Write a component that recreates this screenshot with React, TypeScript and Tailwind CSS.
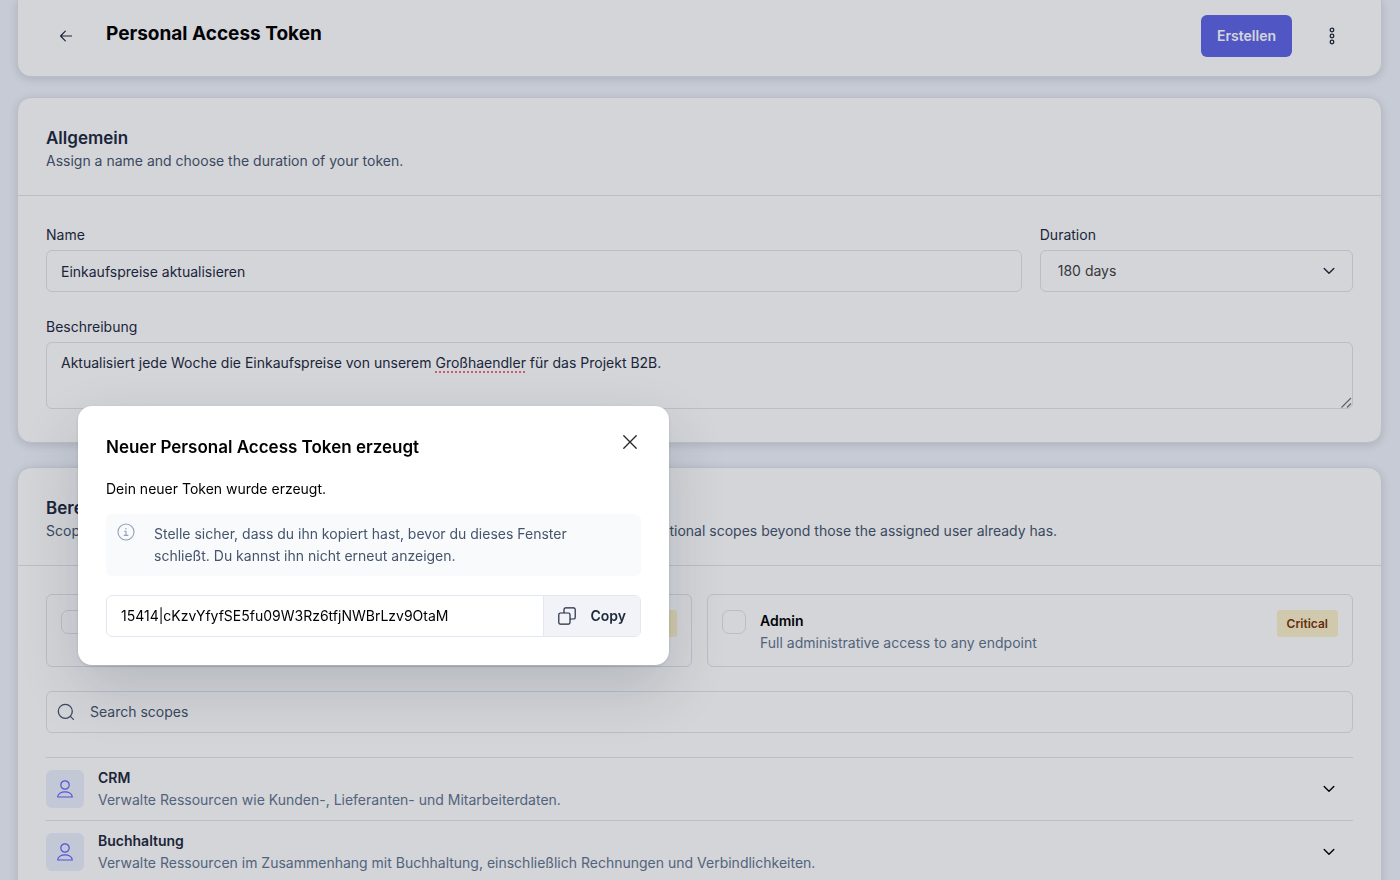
import { useState } from "react";
import type { ReactNode } from "react";

const TOKEN = "15414|cKzvYfyfSE5fu09W3Rz6tfjNWBrLzv9OtaM";

function ArrowLeftIcon() {
  return (
    <svg width="12" height="12" viewBox="0 0 12 12" fill="none" stroke="currentColor" strokeWidth="1.2" strokeLinecap="round" strokeLinejoin="round" aria-hidden="true">
      <path d="M11.5 6H.7M5.3 1.2.6 6l4.7 4.8" />
    </svg>
  );
}

function MoreIcon() {
  return (
    <svg width="6" height="18" viewBox="0 0 6 18" fill="none" stroke="currentColor" strokeWidth="1.3" aria-hidden="true">
      <circle cx="3" cy="3" r="1.8" />
      <circle cx="3" cy="9" r="1.8" />
      <circle cx="3" cy="15" r="1.8" />
    </svg>
  );
}

function ChevronIcon() {
  return (
    <svg width="12" height="8" viewBox="0 0 12 8" fill="none" stroke="currentColor" strokeWidth="1.4" strokeLinecap="round" strokeLinejoin="round" aria-hidden="true">
      <path d="M1.200 1.500 6 6.300l4.800-4.800" />
    </svg>
  );
}

function SearchIcon() {
  return (
    <svg width="18" height="18" viewBox="0 0 18 18" fill="none" stroke="currentColor" strokeWidth="1.3" strokeLinecap="round" aria-hidden="true">
      <circle cx="8.3" cy="8.3" r="7" />
      <path d="m13.4 13.4 3 3" />
    </svg>
  );
}

function UserIcon() {
  return (
    <svg width="18" height="20" viewBox="0 0 18 20" fill="none" stroke="currentColor" strokeWidth="1.2" strokeLinejoin="round" aria-hidden="true">
      <circle cx="9" cy="6" r="4.2" />
      <path d="M1.7 18c.2-3.100 3.500-5.100 7.300-5.100s7.100 2 7.300 5.100Z" />
    </svg>
  );
}

function InfoIcon() {
  return (
    <svg width="18" height="18" viewBox="0 0 18 18" fill="none" stroke="currentColor" strokeWidth="1.1" strokeLinecap="round" strokeLinejoin="round" aria-hidden="true">
      <circle cx="9" cy="9" r="8" />
      <path d="M7.600 8.200H9v4M7.200 12.400h3.700" />
      <circle cx="8.900" cy="5.700" r=".7" fill="currentColor" stroke="none" />
    </svg>
  );
}

function CloseIcon() {
  return (
    <svg width="14" height="14" viewBox="0 0 14 14" fill="none" stroke="currentColor" strokeWidth="1.3" strokeLinecap="round" aria-hidden="true">
      <path d="m.8.8 12.400 12.400M13.200.8.8 13.200" />
    </svg>
  );
}

function CopyIcon() {
  return (
    <svg width="18" height="18" viewBox="0 0 18 18" fill="none" stroke="currentColor" strokeWidth="1.2" strokeLinejoin="round" aria-hidden="true">
      <rect x=".8" y="6" width="11.200" height="11.200" rx="1.600" />
      <path d="M6 6V2.400C6 1.500 6.700.8 7.600.8h8c.9 0 1.600.7 1.600 1.600v8c0 .9-.7 1.600-1.600 1.600H12" />
    </svg>
  );
}

function GripIcon() {
  return (
    <svg width="11" height="11" viewBox="0 0 11 11" fill="none" stroke="currentColor" strokeWidth="1.2" aria-hidden="true">
      <path d="M.5 10.500 10 1M6 10.500l4-4" />
    </svg>
  );
}

function Card({ title, text, className, children }: { title: string; text: string; className: string; children: ReactNode }) {
  return (
    <section className={`rounded-[14px] border border-[#dfe3ea] bg-white shadow-[0_2px_8px_rgba(15,23,42,0.14)] ${className}`}>
      <header className="border-b border-[#dfe3ea] px-7 pt-7 pb-[23px]">
        <h2 className="text-[17px] leading-6 font-semibold text-slate-800">{title}</h2>
        <p className="text-slate-600">{text}</p>
      </header>
      <div className="px-7 pt-7 pb-[33px]">{children}</div>
    </section>
  );
}

function ScopeCard({ id, title, text, badge }: { id: string; title: string; text: string; badge: string }) {
  return (
    <div className="flex items-start rounded-md border border-[#dfe3ea] px-[14px] pt-[15px] pb-3">
      <input id={id} type="checkbox" className="size-6 shrink-0 appearance-none rounded-[7px] border border-[#dfe3ea] checked:bg-indigo-500" />
      <label htmlFor={id} className="ml-[14px] flex-1">
        <span className="block font-semibold text-black">{title}</span>
        <span className="block text-slate-500">{text}</span>
      </label>
      <span className="rounded-[3px] bg-[#fcf1ca] px-[10px] py-1 text-[12px] leading-[19px] font-semibold text-amber-900">{badge}</span>
    </div>
  );
}

function ScopeGroup({ title, text }: { title: string; text: string }) {
  return (
    <li className="border-t border-[#dfe3ea]">
      <button type="button" className="flex w-full items-center py-[9px] pr-[18px] text-left">
        <span className="flex size-[38px] items-center justify-center rounded-md bg-[#ebeffd] text-indigo-500">
          <UserIcon />
        </span>
        <span className="ml-[14px] flex-1">
          <span className="block font-semibold text-slate-800">{title}</span>
          <span className="block text-slate-500">{text}</span>
        </span>
        <span className="text-black">
          <ChevronIcon />
        </span>
      </button>
    </li>
  );
}

export default function App() {
  const [open, setOpen] = useState(true);

  return (
    <div className="h-screen overflow-hidden bg-[#eff3fa] font-['Inter',sans-serif] text-[14px] leading-[22px]">
      <main className="pr-[18px] pl-[17px]">
        <header className="flex items-center rounded-b-[14px] border border-t-0 border-[#dfe3ea] bg-white pt-[15px] pr-[45px] pb-[19px] pl-[42px] shadow-[0_2px_8px_rgba(15,23,42,0.14)]">
          <button type="button" aria-label="Zurück" className="text-slate-800">
            <ArrowLeftIcon />
          </button>
          <h1 className="ml-[34px] flex-1 pb-1 text-[19px] leading-7 font-bold text-black">Personal Access Token</h1>
          <button type="button" className="h-[42px] rounded-md bg-[#5e65e6] px-4 font-semibold text-white">
            Erstellen
          </button>
          <button type="button" aria-label="Mehr" className="ml-9 px-px text-slate-800">
            <MoreIcon />
          </button>
        </header>

        <Card title="Allgemein" text="Assign a name and choose the duration of your token." className="mt-5">
          <div className="grid grid-cols-4 gap-x-[18px] gap-y-6">
            <div className="col-span-3">
              <label htmlFor="name" className="mb-1 block text-slate-800">Name</label>
              <input id="name" defaultValue="Einkaufspreise aktualisieren" className="block h-[42px] w-full rounded-md border border-[#dfe3ea] px-[14px] text-slate-800" />
            </div>
            <div>
              <label htmlFor="duration" className="mb-1 block text-slate-800">Duration</label>
              <div className="relative">
                <select id="duration" className="block h-[42px] w-full appearance-none rounded-md border border-[#dfe3ea] px-[17px] text-neutral-700">
                  <option>180 days</option>
                </select>
                <span className="pointer-events-none absolute inset-y-0 right-[18px] flex items-center text-slate-800">
                  <ChevronIcon />
                </span>
              </div>
            </div>
            <div className="col-span-4">
              <label htmlFor="description" className="mb-1 block text-slate-800">Beschreibung</label>
              <div className="relative">
                <textarea
                  id="description"
                  spellCheck={false}
                  defaultValue="Aktualisiert jede Woche die Einkaufspreise von unserem Großhaendler für das Projekt B2B."
                  className="block h-[67px] w-full resize-y rounded-md border border-[#dfe3ea] px-[14px] py-[9px] text-slate-800 [&::-webkit-resizer]:bg-transparent"
                />
                <div aria-hidden="true" className="pointer-events-none absolute inset-0 border border-transparent px-[14px] py-[9px] text-transparent">
                  Aktualisiert jede Woche die Einkaufspreise von unserem{" "}
                  <span className="underline decoration-red-500/70 decoration-dotted decoration-2 underline-offset-3">Großhaendler</span>
                </div>
                <span className="pointer-events-none absolute right-px bottom-px text-neutral-500">
                  <GripIcon />
                </span>
              </div>
            </div>
          </div>
        </Card>

        <Card
          title="Bereiche"
          text="Scopes define the access for personal tokens. They limit the access and do not grant any additional scopes beyond those the assigned user already has."
          className="mt-6"
        >
          <div className="grid grid-cols-2 gap-[15px]">
            <ScopeCard id="scope-read" title="Read" text="Read access to any endpoint" badge="Critical" />
            <ScopeCard id="scope-admin" title="Admin" text="Full administrative access to any endpoint" badge="Critical" />
          </div>
          <div className="mt-6 flex h-[42px] items-center rounded-md border border-[#dfe3ea] px-[10px] text-slate-600">
            <SearchIcon />
            <input type="search" aria-label="Search scopes" placeholder="Search scopes" className="ml-[15px] flex-1 outline-none placeholder:text-slate-600" />
          </div>
          <ul className="mt-6">
            <ScopeGroup title="CRM" text="Verwalte Ressourcen wie Kunden-, Lieferanten- und Mitarbeiterdaten." />
            <ScopeGroup title="Buchhaltung" text="Verwalte Ressourcen im Zusammenhang mit Buchhaltung, einschließlich Rechnungen und Verbindlichkeiten." />
          </ul>
        </Card>
      </main>

      {open && (
        <div className="fixed inset-0 bg-slate-900/18">
          <div
            role="dialog"
            aria-modal="true"
            aria-labelledby="dialog-title"
            className="absolute top-[406px] left-[78px] w-[591px] rounded-[14px] bg-white px-7 pt-7 pb-7 text-black shadow-[0_24px_60px_rgba(15,30,35,0.16),0_1px_3px_rgba(15,23,42,0.12)]"
          >
            <div className="flex items-start justify-between pr-1">
              <h2 id="dialog-title" className="text-[17px] leading-[26px] font-semibold">Neuer Personal Access Token erzeugt</h2>
              <button type="button" aria-label="Schließen" onClick={() => setOpen(false)} className="py-px text-neutral-800">
                <CloseIcon />
              </button>
            </div>
            <p className="mt-[18px]">Dein neuer Token wurde erzeugt.</p>
            <div className="mt-[14px] flex items-start rounded-md bg-slate-50 px-[11px] py-[9px] text-slate-600">
              <span className="shrink-0 text-slate-400">
                <InfoIcon />
              </span>
              <p className="ml-[19px] max-w-[440px]">
                Stelle sicher, dass du ihn kopiert hast, bevor du dieses Fenster schließt. Du kannst ihn nicht erneut anzeigen.
              </p>
            </div>
            <div className="mt-[19px] flex h-[42px] overflow-hidden rounded-md border border-slate-200">
              <input readOnly aria-label="Token" value={TOKEN} className="min-w-0 flex-1 px-[14px] outline-none" />
              <button
                type="button"
                onClick={() => navigator.clipboard?.writeText(TOKEN)}
                className="flex items-center gap-[14px] border-l border-slate-200 bg-[#f1f3f8] px-[14px] font-semibold text-slate-800"
              >
                <CopyIcon />
                Copy
              </button>
            </div>
          </div>
        </div>
      )}
    </div>
  );
}
